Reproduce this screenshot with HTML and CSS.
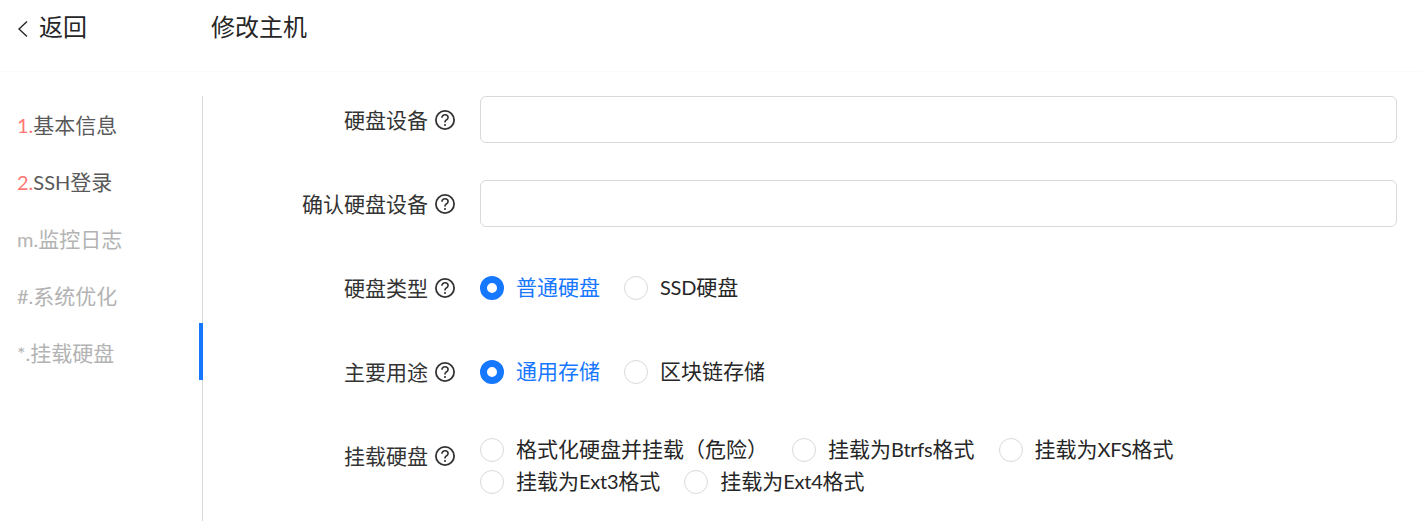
FILE: index.html
```html
<!DOCTYPE html>
<html lang="zh-CN">
<head>
<meta charset="utf-8">
<title>修改主机</title>
<link rel="stylesheet" href="styles.css">
</head>
<body>
<header class="top">
  <a class="back">
    <svg class="back-icon" width="12" height="18" viewBox="0 0 12 18"><path d="M10 1.500 2 9l8 7.500" fill="none" stroke="#262626" stroke-width="1.400"/></svg>
    <span>返回</span>
  </a>
  <h1 class="title">修改主机</h1>
</header>
<div class="main">
  <nav class="side">
    <a class="step"><span class="num lat">1.</span>基本信息</a>
    <a class="step"><span class="num lat">2.</span><span class="lat">SSH</span>登录</a>
    <a class="step muted"><span class="lat">m.</span>监控日志</a>
    <a class="step muted"><span class="lat">#.</span>系统优化</a>
    <a class="step muted active"><span class="lat">*.</span>挂载硬盘</a>
  </nav>
  <form class="form">
    <div class="row">
      <label class="label"><span class="label-text">硬盘设备</span><svg class="help" viewBox="0 0 20 20"><use href="#q"/></svg></label>
      <div class="control"><input class="input" type="text"></div>
    </div>
    <div class="row">
      <label class="label"><span class="label-text">确认硬盘设备</span><svg class="help" viewBox="0 0 20 20"><use href="#q"/></svg></label>
      <div class="control"><input class="input" type="text"></div>
    </div>
    <div class="row">
      <label class="label"><span class="label-text">硬盘类型</span><svg class="help" viewBox="0 0 20 20"><use href="#q"/></svg></label>
      <div class="control radios">
        <span class="radio on"><i class="dot"></i><span class="txt">普通硬盘</span></span>
        <span class="radio"><i class="dot"></i><span class="txt"><span class="lat">SSD</span>硬盘</span></span>
      </div>
    </div>
    <div class="row">
      <label class="label"><span class="label-text">主要用途</span><svg class="help" viewBox="0 0 20 20"><use href="#q"/></svg></label>
      <div class="control radios">
        <span class="radio on"><i class="dot"></i><span class="txt">通用存储</span></span>
        <span class="radio"><i class="dot"></i><span class="txt">区块链存储</span></span>
      </div>
    </div>
    <div class="row last">
      <label class="label"><span class="label-text">挂载硬盘</span><svg class="help" viewBox="0 0 20 20"><use href="#q"/></svg></label>
      <div class="control radios wrap">
        <span class="radio"><i class="dot"></i><span class="txt">格式化硬盘并挂载（危险）</span></span>
        <span class="radio"><i class="dot"></i><span class="txt">挂载为<span class="lat">Btrfs</span>格式</span></span>
        <span class="radio"><i class="dot"></i><span class="txt">挂载为<span class="lat">XFS</span>格式</span></span>
        <span class="break"></span>
        <span class="radio"><i class="dot"></i><span class="txt">挂载为<span class="lat">Ext3</span>格式</span></span>
        <span class="radio"><i class="dot"></i><span class="txt">挂载为<span class="lat">Ext4</span>格式</span></span>
      </div>
    </div>
  </form>
</div>
<svg class="defs" width="0" height="0">
  <symbol id="q" viewBox="0 0 20 20">
    <circle cx="10" cy="10" r="9.100" fill="none" stroke="#333" stroke-width="1.800"/>
    <path d="M6.900 7.700C6.900 5.900 8.300 4.800 10 4.800s3.100 1.100 3.100 2.700c0 1.300-.9 2-1.800 2.500-.9.500-1.300 1.100-1.300 2v.6" fill="none" stroke="#333" stroke-width="1.600"/>
    <circle cx="10" cy="15" r="1.050" fill="#333"/>
  </symbol>
</svg>
</body>
</html>
```

FILE: styles.css
```css
* { box-sizing: border-box; }
html, body { margin: 0; padding: 0; }
body {
  width: 1421px;
  height: 521px;
  overflow: hidden;
  background: #fff;
  color: #262626;
  font-family: Lato, "Noto Sans CJK SC", sans-serif;
  font-size: 21px;
}
.lat { font-size: 20px; }
.txt .lat { letter-spacing: -0.25px; }
.top {
  display: flex;
  align-items: center;
  height: 72px;
  padding: 0 0 18px 17px;
  border-bottom: 1px solid #fbfbfb;
  margin-bottom: 24px;
  font-size: 24px;
  line-height: 32px;
}
.back { display: flex; align-items: center; width: 194px; }
.back-icon { margin-right: 10px; margin-top: 5px; }
.title { margin: 0; font-size: 24px; font-weight: 400; line-height: 32px; }
.main { display: flex; height: 425px; }
.side {
  flex: none;
  width: 203px;
  border-right: 1px solid #d9d9d9;
}
.step {
  display: block;
  position: relative;
  height: 57px;
  padding-left: 17px;
  line-height: 57px;
  color: #595959;
}
.num { color: #ff7875; }
.muted { color: #b3b3b3; }
.active::after {
  content: "";
  position: absolute;
  top: -1px;
  right: -1px;
  width: 4px;
  height: 57px;
  background: #1677ff;
}
.form { flex: 1; padding-right: 24px; }
.row { display: flex; height: 47px; margin-bottom: 37px; }
.row.last { height: 64px; margin: 0; }
.label {
  flex: none;
  display: flex;
  align-items: center;
  justify-content: flex-end;
  width: 252px;
  height: 47px;
  margin-right: 25px;
  color: #333;
}
.label-text { margin-bottom: 2px; }
.help { width: 20px; height: 20px; margin-left: 7px; }
.control { flex: 1; }
.input {
  display: block;
  width: 100%;
  height: 47px;
  border: 1px solid #d9d9d9;
  border-radius: 6px;
  background: #fff;
}
.radios { display: flex; align-items: center; }
.wrap { flex-wrap: wrap; align-items: flex-start; align-content: flex-start; padding-top: 2px; }
.break { flex-basis: 100%; height: 0; }
.radio {
  display: inline-flex;
  align-items: center;
  height: 32px;
  margin-right: 24px;
  line-height: 32px;
  white-space: nowrap;
  color: #262626;
}
.txt { margin-bottom: 2px; }
.dot {
  flex: none;
  width: 24px;
  height: 24px;
  margin-right: 12px;
  border: 1px solid #d9d9d9;
  border-radius: 50%;
  background: #fff;
}
.radio.on { color: #1677ff; }
.radio.on .dot { border: 7.500px solid #1677ff; }
.defs { position: absolute; }
```
